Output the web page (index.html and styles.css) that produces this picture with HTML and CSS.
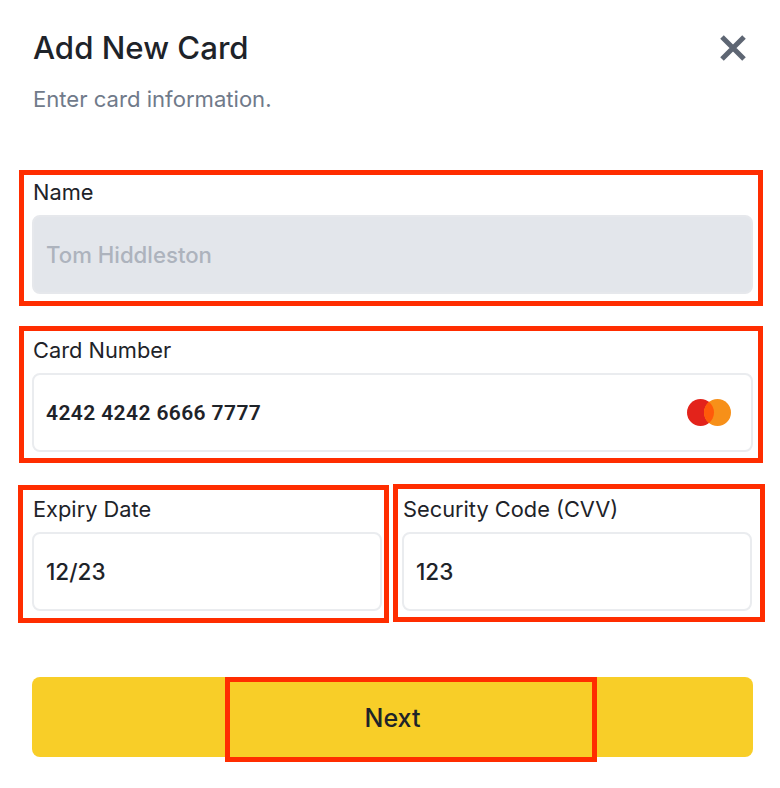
FILE: index.html
```html
<!DOCTYPE html>
<html lang="en">

<head>
    <meta charset="UTF-8">
    <meta name="viewport" content="width=device-width, initial-scale=1.0">
    <title>Add New Card</title>
    <link rel="stylesheet" href="styles.css">
</head>

<body>
    <div class="page">
        <div class="header">
            <h1 class="title">Add New Card</h1>
            <svg class="close" width="26" height="26" viewBox="0 0 26 26">
                <path d="M2 2L24 24M24 2L2 24" stroke="#5e6673" stroke-width="5" fill="none" />
            </svg>
        </div>
        <p class="subtitle">Enter card information.</p>

        <div class="field field-name">
            <div class="label">Name</div>
            <div class="input disabled">Tom Hiddleston</div>
        </div>

        <div class="field field-number">
            <div class="label">Card Number</div>
            <div class="input">
                <span class="number">4242 4242 6666 7777</span>
                <svg class="brand" width="44" height="27" viewBox="0 0 44 27">
                    <circle cx="13.5" cy="13.5" r="13.5" fill="#e3231b" />
                    <circle cx="30.5" cy="13.5" r="13.5" fill="#f79019" />
                    <path d="M22 3a13.5 13.5 0 0 1 0 21a13.5 13.5 0 0 1 0-21z" fill="#ff5a0a" />
                </svg>
            </div>
        </div>

        <div class="row">
            <div class="field">
                <div class="label">Expiry Date</div>
                <div class="input">12/23</div>
            </div>
            <div class="field">
                <div class="label">Security Code (CVV)</div>
                <div class="input">123</div>
            </div>
        </div>

        <button class="next">Next</button>
    </div>

    <!-- red annotation boxes -->
    <div class="mark mark-name"></div>
    <div class="mark mark-number"></div>
    <div class="mark mark-expiry"></div>
    <div class="mark mark-cvv"></div>
    <div class="mark mark-next"></div>
</body>

</html>
```

FILE: styles.css
```css
* {
    box-sizing: border-box;
}

body {
    margin: 0;
    background: white;
    color: #1e2329;
    font-family: "Inter", "Noto Sans", sans-serif;
}

.page {
    width: 780px;
    height: 788px;
    padding: 28px 27px 0 32px;
    overflow: hidden;
}

.header {
    display: flex;
    justify-content: space-between;
    align-items: center;
    height: 40px;
    padding-right: 7px;
}

.title {
    margin: 0;
    padding-left: 1px;
    font-size: 31.2px;
    font-weight: 500;
}

.subtitle {
    margin: 14px 0 0;
    padding-left: 1px;
    color: #707a8a;
    font-size: 22.1px;
    line-height: 34px;
}

.field {
    display: flex;
    flex-direction: column;
}

.field-name {
    margin-top: 61px;
}

.field-number {
    margin-top: 41px;
}

.label {
    height: 38px;
    padding-left: 1px;
    font-size: 21.8px;
    line-height: 30px;
}

.input {
    display: flex;
    justify-content: space-between;
    align-items: center;
    height: 79px;
    padding: 0 20px 0 12px;
    border: 2px solid #eaecef;
    border-radius: 8px;
    font-size: 22.5px;
    font-weight: 500;
}

.number {
    font-family: "Roboto", sans-serif;
    font-size: 21px;
    font-weight: 600;
    letter-spacing: 0.4px;
}

.disabled {
    border-color: #e6e8ec;
    background: #e3e6eb;
    color: #adb3bd;
    font-size: 22.2px;
    font-weight: 500;
}

.brand {
    display: block;
}

.row {
    display: grid;
    grid-template-columns: 350px 350px;
    gap: 20px;
    margin-top: 42px;
}

.next {
    display: block;
    width: 721px;
    height: 80px;
    margin-top: 66px;
    padding-top: 2px;
    border: 0;
    border-radius: 8px;
    background: #f8ce28;
    color: #1e2329;
    font-family: inherit;
    font-size: 25px;
    font-weight: 500;
}

.mark {
    position: absolute;
    border: 5px solid #ff2d00;
}

.mark-name {
    left: 19px;
    top: 170px;
    width: 744px;
    height: 136px;
}

.mark-number {
    left: 19px;
    top: 326px;
    width: 744px;
    height: 137px;
}

.mark-expiry {
    left: 18px;
    top: 485px;
    width: 371px;
    height: 138px;
}

.mark-cvv {
    left: 393px;
    top: 484px;
    width: 372px;
    height: 138px;
}

.mark-next {
    left: 225px;
    top: 677px;
    width: 372px;
    height: 85px;
}
```
